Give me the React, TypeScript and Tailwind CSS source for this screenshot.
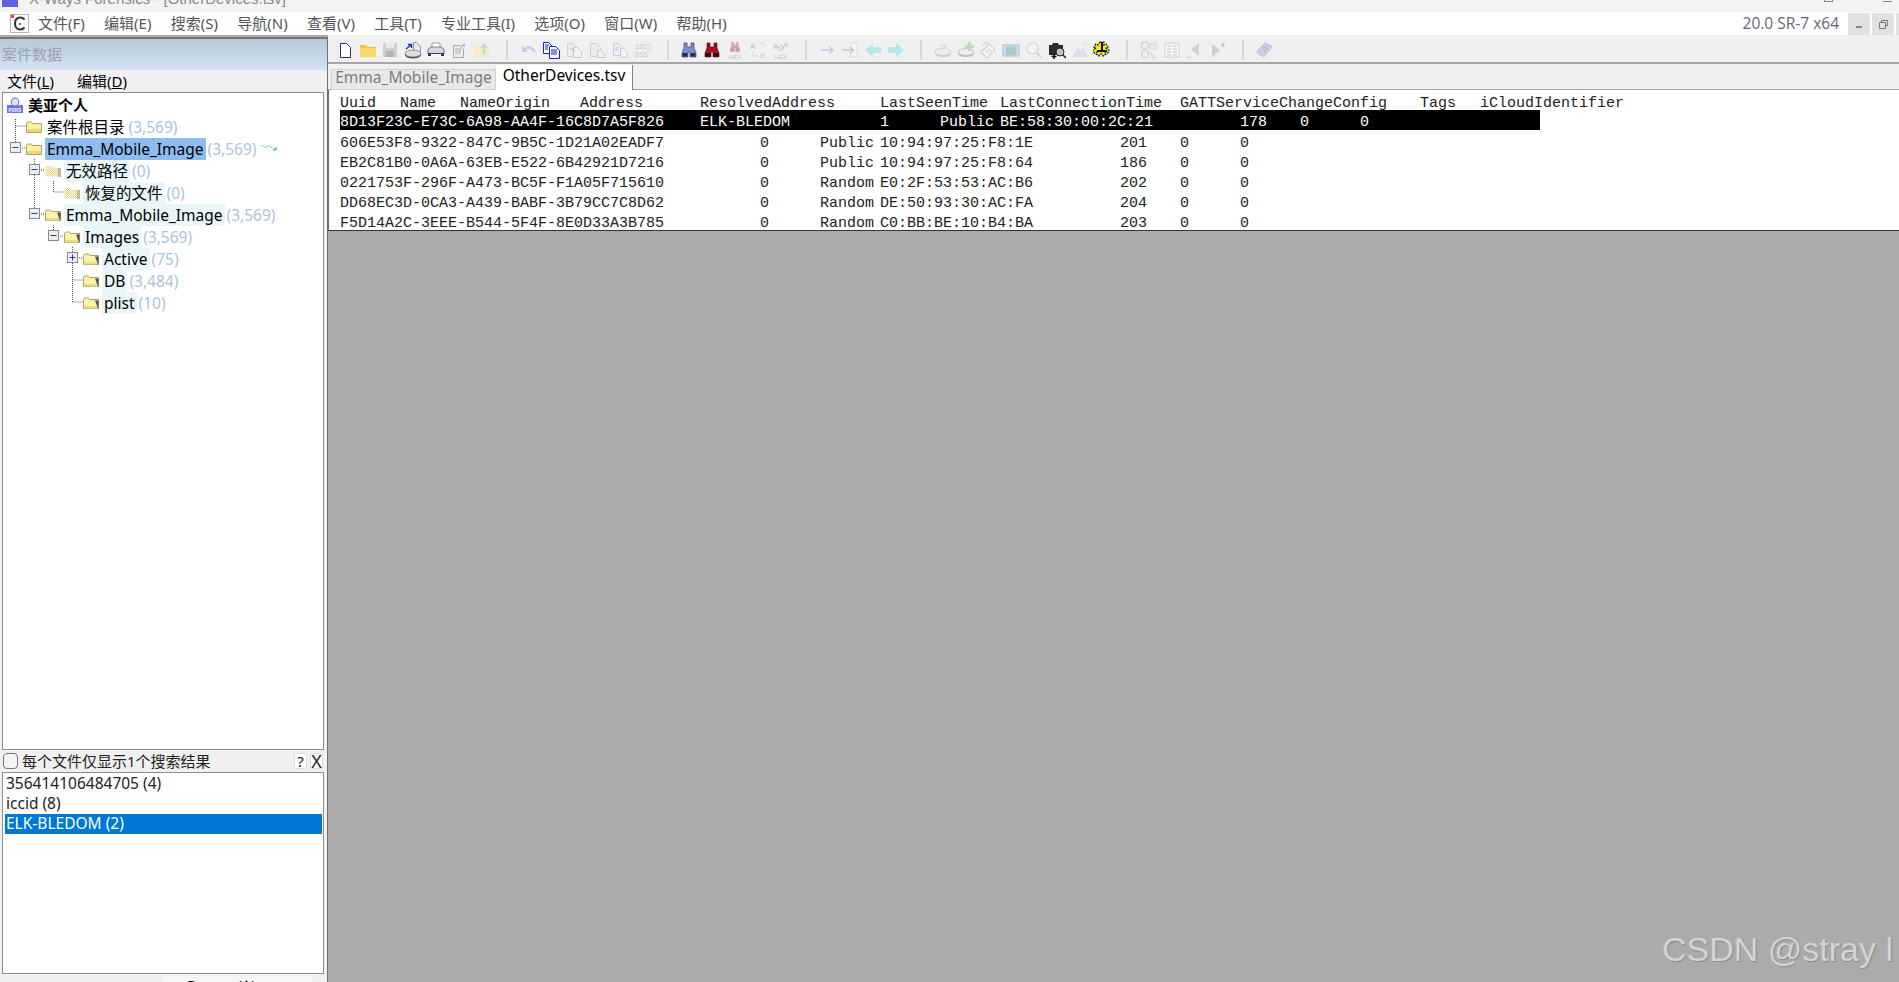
import type { ReactNode } from "react";

const uiFont = "font-['Noto_Sans','Noto_Sans_CJK_SC',sans-serif]";

const menus = ["文件(F)", "编辑(E)", "搜索(S)", "导航(N)", "查看(V)", "工具(T)", "专业工具(I)", "选项(O)", "窗口(W)", "帮助(H)"];

const tableRows = [
  "606E53F8-9322-847C-9B5C-1D21A02EADF7\t\t0\tPublic\t10:94:97:25:F8:1E\t\t201\t0\t0",
  "EB2C81B0-0A6A-63EB-E522-6B42921D7216\t\t0\tPublic\t10:94:97:25:F8:64\t\t186\t0\t0",
  "0221753F-296F-A473-BC5F-F1A05F715610\t\t0\tRandom\tE0:2F:53:53:AC:B6\t\t202\t0\t0",
  "DD68EC3D-0CA3-A439-BABF-3B79CC7C8D62\t\t0\tRandom\tDE:50:93:30:AC:FA\t\t204\t0\t0",
  "F5D14A2C-3EEE-B544-5F4F-8E0D33A3B785\t\t0\tRandom\tC0:BB:BE:10:B4:BA\t\t203\t0\t0",
];

const Svg = ({ children, className = "" }: { children: ReactNode; className?: string }) => (
  <svg viewBox="0 0 18 18" width="18" height="18" className={className}>{children}</svg>
);

const Doc = ({ x = 4, y = 2, w = 10, h = 14, stroke = "#2b2f7a", fill = "#fff" }) => (
  <path d={`M${x + 0.5} ${y + 0.5}h${w - 4}l4 4v${h - 4}h-${w}z`} fill={fill} stroke={stroke} />
);

const Binoculars = ({ color, dark, opacity = 1 }: { color: string; dark: string; opacity?: number }) => (
  <g opacity={opacity}>
    <path d="M4 2h3v4h4V2h3v5l2 5v4h-6v-5H8v5H2v-4l2-5z" fill={color} stroke={dark} strokeWidth="0.6" />
    <rect x="2.5" y="12" width="5" height="3.5" fill={dark} />
    <rect x="10.5" y="12" width="5" height="3.5" fill={dark} />
  </g>
);

const Hex = () => <text x="9" y="17.5" fontSize="6" textAnchor="middle" fill="#c4c4c4" fontFamily="Liberation Sans">HEX</text>;

const Disk = ({ o = 1 }: { o?: number }) => (
  <g opacity={o}>
    <ellipse cx="9" cy="12.5" rx="8" ry="3.5" fill="#a9a9a9" />
    <ellipse cx="9" cy="11" rx="8" ry="3.5" fill="#ececec" stroke="#a0a0a0" strokeWidth="0.6" />
  </g>
);

const toolbar: (ReactNode | null)[] = [
  <Svg><Doc /></Svg>,
  <Svg>
    <path d="M1 4h6l1.5 2H17v10H1z" fill="#f7c234" />
    <path d="M1 7h16v9H1z" fill="#fcd765" />
  </Svg>,
  <Svg>
    <path d="M2 2h14v14H2z" fill="#cfcfcf" />
    <path d="M5 2h8v5H5z" fill="#ececec" />
    <path d="M5 10h8v6H5z" fill="#b5b5b5" />
  </Svg>,
  <Svg>
    <Doc x={9} y={1} w={7} h={9} stroke="#8a8fc0" fill="#e8e9f8" />
    <path d="M2 8l5-4M4 3.5h3.5V7" fill="none" stroke="#1a2bb0" strokeWidth="1.4" />
    <ellipse cx="9" cy="14" rx="8" ry="3.5" fill="#555" />
    <ellipse cx="9" cy="12.5" rx="8" ry="3.5" fill="#dcdcdc" stroke="#666" strokeWidth="0.6" />
  </Svg>,
  <Svg>
    <path d="M5 2h8v5H5z" fill="#fff" stroke="#777" strokeWidth="0.7" />
    <path d="M1 8l3-2h10l3 2v5H1z" fill="#cfd6dc" stroke="#556" strokeWidth="0.7" />
    <path d="M1 12h16v3H1z" fill="#3b4048" />
    <path d="M4 13h10v3H4z" fill="#f6f6f6" />
  </Svg>,
  <Svg>
    <Doc x={3} y={4} w={10} h={12} stroke="#aaa" fill="#ececec" />
    <path d="M5 8h6M5 10h6M5 12h6" stroke="#b0b0b0" />
    <path d="M10 5l5-3v4z" fill="#bdbdd8" />
  </Svg>,
  <Svg>
    <path d="M1 4h6l1 2h9v10H1z" fill="#f4ecc8" />
    <path d="M11 2l4 5h-2.5v6h-3V7H7z" fill="#bfe3c2" />
  </Svg>,
  null,
  <Svg><path d="M2 5v6h6L6 9c2-2 6-2 8 3l1.500-1C14 5 8 3 4.500 7z" fill="#bcd0ea" /></Svg>,
  <Svg>
    <Doc x={1} y={1} w={9} h={11} stroke="#1420c8" />
    <Doc x={7} y={5} w={10} h={12} stroke="#1420c8" />
    <path d="M9 9h6M9 11h6M9 13h6M3 4h4M3 6h3M3 8h3" stroke="#1420c8" />
  </Svg>,
  <Svg>
    <Doc x={2} y={2} w={9} h={13} stroke="#d6cdbc" fill="#efece6" />
    <Doc x={8} y={6} w={8} h={10} stroke="#cbc7d6" fill="#f2f2f2" />
    <path d="M5 8h4v3" fill="none" stroke="#c4bcae" />
  </Svg>,
  <Svg>
    <Doc x={2} y={2} w={10} h={13} stroke="#d6cdbc" fill="#efece6" />
    <Doc x={9} y={9} w={7} h={7} stroke="#cbc7d6" fill="#f2f2f2" />
  </Svg>,
  <Svg>
    <Doc x={2} y={2} w={9} h={12} stroke="#c8c8e0" fill="#efeff6" />
    <Doc x={9} y={7} w={7} h={9} stroke="#c8c8e0" fill="#f2f2f2" />
    <text x="6" y="10" fontSize="7" fill="#c0c0d8" textAnchor="middle" fontFamily="Liberation Sans">k</text>
  </Svg>,
  <Svg>
    <text x="1" y="8" fontSize="7.5" fill="#c0c0c0" fontFamily="Liberation Sans">101</text>
    <text x="1" y="16" fontSize="7.5" fill="#c0c0c0" fontFamily="Liberation Sans">010</text>
    <path d="M13 3h3v7h-3" fill="none" stroke="#cfcfcf" />
  </Svg>,
  null,
  <Svg><Binoculars color="#7f90c8" dark="#232b63" /></Svg>,
  <Svg><Binoculars color="#a3141c" dark="#3a0508" /></Svg>,
  <Svg>
    <g transform="translate(3 0) scale(0.66)"><Binoculars color="#d8a6a6" dark="#c09a9a" /></g>
    <Hex />
  </Svg>,
  <Svg>
    <text x="1" y="8" fontSize="8" fill="#bcbcbc" fontFamily="Liberation Sans">A</text>
    <text x="11" y="17" fontSize="8" fill="#c2cce8" fontFamily="Liberation Sans">B</text>
    <path d="M11 2l4 0v4M4 11v4h5" fill="none" stroke="#c2cce8" strokeDasharray="1.500 1" />
  </Svg>,
  <Svg>
    <text x="1" y="8" fontSize="8" fill="#bcbcbc" fontFamily="Liberation Sans">A</text>
    <path d="M9 8l6-5M12 3h3v3" fill="none" stroke="#b6c6e6" />
    <circle cx="9" cy="7" r="2.500" fill="none" stroke="#c2cce8" />
    <Hex />
  </Svg>,
  null,
  <Svg><path d="M2 9h12M10 5.500L14 9l-4 3.500" fill="none" stroke="#c3c6e6" strokeWidth="1.300" /></Svg>,
  <Svg>
    <path d="M9 2h7v14H9l1-2-1-2 1-3-1-2 1-2z" fill="#f3f3f3" stroke="#d2d2d2" strokeWidth="0.6" />
    <path d="M1 9h11M9 5.500L12.500 9 9 12.500" fill="none" stroke="#c3c6e6" strokeWidth="1.300" />
  </Svg>,
  <Svg><path d="M1 9l8-7v4h8v6H9v4z" fill="#b6e7ea" /></Svg>,
  <Svg><path d="M17 9l-8-7v4H1v6h8v4z" fill="#b6e7ea" /></Svg>,
  null,
  <Svg>
    <Disk o={0.55} />
    <path d="M6 6c1-3 5-3 6 0M12 3v3.500H9" fill="none" stroke="#cfcfcf" />
  </Svg>,
  <Svg>
    <Disk o={0.75} />
    <path d="M11 1h3v3h3v3h-3v3h-3V7H8V4h3z" fill="#bcdcc0" />
  </Svg>,
  <Svg>
    <path d="M2 11l8-8 6 6-8 8z" fill="#f4f4f4" stroke="#c4c4c4" />
    <path d="M6 8l5 5M8 6l5 5" stroke="#cdcdcd" />
    <path d="M4 5c1-3 4-4 6-3" fill="none" stroke="#c6c6c6" />
  </Svg>,
  <Svg>
    <rect x="1" y="4" width="16" height="11" fill="#cfe9ee" stroke="#8fb6c6" strokeWidth="0.8" />
    <path d="M3 7h12M3 9h12M3 11h12M3 13h12M5 5v9M7 5v9M9 5v9M11 5v9M13 5v9" stroke="#94a8b4" strokeWidth="0.6" />
  </Svg>,
  <Svg>
    <circle cx="7.500" cy="7.500" r="5.500" fill="#eef3f7" stroke="#cfdae4" strokeWidth="1.400" />
    <path d="M11.500 11.500l5 5" stroke="#d5d5d5" strokeWidth="2" />
  </Svg>,
  <Svg>
    <path d="M1 4h3l1-2h5l1 2h4v10H1z" fill="#2c2c2c" />
    <circle cx="12" cy="11" r="4" fill="#b8c4cc" stroke="#222" />
    <path d="M6 13v5M3.500 15.500h5" stroke="#111" strokeWidth="1.500" />
    <path d="M15 14l3 3" stroke="#222" strokeWidth="1.500" />
  </Svg>,
  <Svg>
    <path d="M1 16l6-10 3 4 2-3 5 9z" fill="#dfe0ee" />
    <circle cx="14" cy="4" r="2" fill="#f4e6c2" />
  </Svg>,
  <Svg>
    <path d="M7 1h4v3l2-1 2 3-2 1 3 2-1 3-3-1 1 2-3 2-1-2h-2l-1 2-3-2 1-2-3 1-1-3 3-2-2-1 2-3 2 1z" fill="#f5e21f" stroke="#111" strokeWidth="1.200" strokeDasharray="2 1" />
    <path d="M8 1h2v8H8zM4 9h10v2H4z" fill="#111" />
  </Svg>,
  null,
  <Svg>
    <circle cx="5" cy="4.500" r="3.500" fill="none" stroke="#c4d4da" strokeWidth="1.200" />
    <circle cx="5" cy="13" r="3.500" fill="none" stroke="#c4d4da" strokeWidth="1.200" />
    <path d="M10 2h7v6h-7zM10 11l6 6-3 .5z" fill="#e8e8e8" stroke="#cfcfcf" strokeWidth="0.6" />
  </Svg>,
  <Svg>
    <rect x="2" y="2" width="14" height="14" fill="#f6f6f6" stroke="#cfcfcf" />
    <path d="M4 5h4M4 8h4M4 11h4M4 14h4M10 5h4M10 8h4M10 11h4M10 14h4" stroke="#c6c6c6" />
  </Svg>,
  <Svg>
    <path d="M13 2v13L5 8.500z" fill="#d2d2d2" />
    <path d="M1 16h4" stroke="#cfcfcf" />
  </Svg>,
  <Svg>
    <path d="M3 3v13l8-6.500z" fill="#cfcfcf" />
    <path d="M12 4h4M14 2v4" stroke="#bdbdbd" strokeWidth="1.200" />
  </Svg>,
  null,
  <Svg>
    <path d="M1 10l8-8 7 3-1 2-7 9-7-4z" fill="#d8c6ea" stroke="#bda6d6" strokeWidth="0.6" />
    <text x="9" y="11" fontSize="8" fill="#c7b348" textAnchor="middle" fontFamily="Liberation Sans">?</text>
  </Svg>,
];

const ClosedFolder = () => (
  <svg viewBox="0 0 16 12" width="16" height="12" className="shrink-0">
    <path d="M.5 2.500l1-1.500h4l1 1.500h9v9H.5z" fill="#fdf09a" stroke="#a8a278" />
    <path d="M1 8h14v3H1z" fill="#efd67c" />
  </svg>
);

const OpenFolder = () => (
  <svg viewBox="0 0 16 12" width="16" height="12" className="shrink-0">
    <path d="M.5 2.500l1-1.500h4l1 1.500h9v9H.5z" fill="#fdf2a6" stroke="#a8a278" />
    <path d="M12 3.500l3.500 0v8H15z" fill="#54544a" />
    <path d="M1 9h13v2.500H1z" fill="#efd984" />
  </svg>
);

const GhostFolder = () => (
  <svg viewBox="0 0 16 12" width="16" height="12" className="shrink-0">
    <defs>
      <pattern id="hatch" width="2" height="2" patternUnits="userSpaceOnUse">
        <rect width="2" height="2" fill="#fff" />
        <rect width="1" height="1" fill="#e8cf6a" />
        <rect x="1" y="1" width="1" height="1" fill="#e8cf6a" />
      </pattern>
    </defs>
    <path d="M.5 2.500l1-1.500h4l1 1.500h9v9H.5z" fill="url(#hatch)" />
    <path d="M13 3h3v9h-3z" fill="#a8a48e" opacity="0.7" />
  </svg>
);

const RootIcon = () => (
  <svg viewBox="0 0 16 16" width="16" height="16" className="shrink-0">
    <rect x="0" y="8" width="16" height="8" fill="#6a72e8" />
    <circle cx="8" cy="5" r="3.800" fill="#dde4fa" stroke="#8088d8" strokeWidth="1.200" />
    <path d="M10.500 8l3 2.500" stroke="#8088d8" strokeWidth="1.400" />
    <text x="8" y="15" fontSize="4.500" textAnchor="middle" fill="#fff" fontFamily="Liberation Sans">PORS</text>
  </svg>
);

type Node = {
  name: string;
  count?: string;
  pad: string;
  icon: ReactNode;
  label: string;
  extra?: ReactNode;
};

const mint = "bg-[#e8f6f7]";

const tree: Node[] = [
  { name: "案件根目录", count: "(3,569)", pad: "pl-[23px]", icon: <ClosedFolder />, label: "" },
  {
    name: "Emma_Mobile_Image",
    count: "(3,569)",
    pad: "pl-[23px]",
    icon: <ClosedFolder />,
    label: "bg-[#8dbdf0]",
    extra: (
      <svg viewBox="0 0 16 8" width="16" height="8" className="ml-[5px] mb-[2px]">
        <path d="M0 1.500c2 0 2 1.500 4 1.500s2-1 4-1 2 2 4 2l3 1.500" fill="none" stroke="#4aa6aa" strokeWidth="0.9" strokeDasharray="1.200 .6" />
        <path d="M15 3v3h-3" fill="none" stroke="#2c8a90" strokeWidth="0.9" />
      </svg>
    ),
  },
  { name: "无效路径", count: "(0)", pad: "pl-[42px]", icon: <GhostFolder />, label: mint },
  { name: "恢复的文件", count: "(0)", pad: "pl-[61px]", icon: <GhostFolder />, label: mint },
  { name: "Emma_Mobile_Image", count: "(3,569)", pad: "pl-[42px]", icon: <OpenFolder />, label: mint },
  { name: "Images", count: "(3,569)", pad: "pl-[61px]", icon: <OpenFolder />, label: mint },
  { name: "Active", count: "(75)", pad: "pl-[80px]", icon: <OpenFolder />, label: mint },
  { name: "DB", count: "(3,484)", pad: "pl-[80px]", icon: <OpenFolder />, label: mint },
  { name: "plist", count: "(10)", pad: "pl-[80px]", icon: <OpenFolder />, label: mint },
];

// dotted connectors and expander boxes, coordinates are inside the tree box
const TreeLines = () => {
  const boxes: [number, number, boolean][] = [
    [7, 55, false],
    [26, 77, false],
    [26, 121, false],
    [45, 143, false],
    [64, 165, true],
  ];
  return (
    <svg className="absolute left-0 top-0" width="120" height="230">
      <path
        d="M12.500 26V56M12.500 33H23M17 55H23M31.500 66V122M36 77H42M36 121H42M50.500 88V99H61M50.500 132V144M55 143H61M69.500 154V209M74 165H80M69.500 187H80M69.500 209H80"
        fill="none"
        stroke="#555"
        strokeDasharray="1 1"
      />
      {boxes.map(([x, y, plus]) => (
        <g key={x + "-" + y}>
          <rect x={x + 0.5} y={y - 5.5} width="10" height="10" fill="#eceef2" stroke="#8a8a8a" />
          <path d={plus ? `M${x + 2.5} ${y - 0.5}h6M${x + 5.5} ${y - 3.5}v6` : `M${x + 2.5} ${y - 0.5}h6`} stroke="#2b3f8c" />
        </g>
      ))}
    </svg>
  );
};

const App = () => {
  return (
    <div className={`relative w-[1899px] h-[982px] overflow-hidden flex flex-col bg-[#ababab] ${uiFont}`}>
      {/* window title, cut off by the screenshot */}
      <div className="h-[12px] shrink-0 bg-[#f3f3f3] overflow-hidden flex items-end pl-[2px] pr-[4px]">
        <svg viewBox="0 0 16 7" width="16" height="7" className="mb-[5px] shrink-0">
          <rect width="16" height="7" fill="#5c62e0" />
        </svg>
        <span className="ml-[11px] text-[15px] leading-[20px] mb-[3px] text-[#8a8a8a] font-['Liberation_Sans',sans-serif] whitespace-pre">
          X-Ways Forensics - [OtherDevices.tsv]
        </span>
        <div className="ml-auto flex items-end gap-[50px] pr-[3px] mb-[10px]">
          <div className="w-[9px] h-[3px] border-x border-b border-[#888]" />
          <div className="w-[9px] h-[3px] border-b border-[#888]" />
        </div>
      </div>

      {/* menu bar */}
      <div className="h-[23px] shrink-0 bg-white flex items-center">
        <svg viewBox="0 0 19 19" width="19" height="19" className="ml-[10px] mr-[9px] shrink-0">
          <rect x=".5" y=".5" width="18" height="18" fill="#fff" stroke="#b5b5b5" />
          <path d="M14.500 5.500c-3-3.500-9.500-2.500-9.500 4s6.500 7.500 9.500 4" fill="none" stroke="#333" strokeWidth="2" />
          <rect x="1" y="1" width="3" height="3" fill="#e04a1c" />
          <rect x="9" y="9" width="2" height="2" fill="#e04a1c" />
        </svg>
        <div className="flex gap-[19.300px] text-[15px] text-[#555]">
          {menus.map((m) => <span key={m} className="whitespace-nowrap">{m}</span>)}
        </div>
        <span className="ml-auto mr-[9px] text-[15.500px] text-[#667] font-['Open_Sans',sans-serif]">20.0 SR-7 x64</span>
        <div className="flex gap-[2px] self-stretch pt-px">
          <div className="w-[22px] bg-[#e1e1e1] flex items-center justify-center">
            <div className="w-[6px] h-[2px] bg-[#888] mt-[6px]" />
          </div>
          <div className="w-[22px] bg-[#e1e1e1] flex items-center justify-center">
            <svg viewBox="0 0 9 9" width="9" height="9"><path d="M2.500 2.500v-2h6v5h-2M.5 2.500h6v6h-6z" fill="none" stroke="#777" /></svg>
          </div>
          <div className="w-[3px] bg-[#e1e1e1]" />
        </div>
      </div>

      <div className="flex-1 flex min-h-0">
        {/* left panel */}
        <div className="w-[328px] shrink-0 flex flex-col bg-[#f0f0f0] border-r border-[#6f6f6f] mt-[2px] border-t-2 border-t-[#777]">
          <div className="h-[31px] shrink-0 bg-linear-to-b from-[#b5c9da] to-[#d4e3f1] flex items-center pl-[2px] text-[15px] text-[#9aa4ad]">
            案件数据
          </div>
          <div className="h-[22px] shrink-0 flex items-center text-[15px] text-black pl-[7px] gap-[23px]">
            <span>文件(<u>L</u>)</span>
            <span>编辑(<u>D</u>)</span>
          </div>
          <div className="flex-1 flex flex-col mx-[2px] mr-[3px] min-h-0">
            <div className="relative h-[658px] shrink-0 bg-white border border-[#8e8e8e] pt-px text-[15.500px] text-black">
              <TreeLines />
              <div className="relative flex flex-col">
                <div className="h-[22px] flex items-center pl-[4px] gap-[5px] font-bold text-[15px]">
                  <RootIcon />
                  <span>美亚个人</span>
                </div>
                {tree.map((n, i) => (
                  <div key={i} className={`h-[22px] flex items-center ${n.pad} whitespace-nowrap`}>
                    {n.icon}
                    <span className={`ml-[3px] h-[22px] px-[2px] leading-[23px] ${n.label}`}>{n.name}</span>
                    <span className="ml-[2px] leading-[23px] text-[#a9c3dd]">{n.count}</span>
                    {n.extra}
                  </div>
                ))}
              </div>
            </div>
            <div className="h-[22px] shrink-0 flex items-center text-[15px] text-[#222]">
              <div className="w-[15px] h-[16px] ml-px rounded-[4px] border border-[#777] bg-[#f4f4f4] shrink-0" />
              <span className="ml-[4px]">每个文件仅显示1个搜索结果</span>
              <div className="ml-auto flex gap-[3px] pr-px">
                <div className="w-[13px] h-[16px] rounded-[2px] border border-[#ddd] bg-white flex items-center justify-center text-[15px] leading-none">?</div>
                <div className="w-[13px] h-[16px] rounded-[2px] border border-[#ddd] bg-white flex items-center justify-center text-[18px] leading-none">X</div>
              </div>
            </div>
            <div className="h-[202px] shrink-0 bg-white border border-[#8e8e8e] p-px pl-[2px] text-[15.500px] leading-[18px] text-[#222]">
              <div className="h-[20px] pl-px">356414106484705 (4)</div>
              <div className="h-[20px] pl-px">iccid (8)</div>
              <div className="h-[20px] pl-px bg-[#0078d7] text-white">ELK-BLEDOM (2)</div>
            </div>
            <div className="flex-1 flex justify-end pr-[12px] overflow-hidden pt-[2px]">
              <div className="w-[149px] h-[20px] bg-[#f6f6f6] pl-[24px] text-[15px] tracking-wide leading-[18px] text-black">Power (^)</div>
            </div>
          </div>
        </div>

        {/* right side */}
        <div className="flex-1 flex flex-col min-w-0">
          <div className="h-[29px] shrink-0 bg-[#f0f0f0] border-b-2 border-[#a6a6a6] flex items-center pl-[5.500px] pt-[2px]">
            {toolbar.map((icon, i) =>
              icon ? (
                <div key={i} className="w-[22.800px] h-[22px] shrink-0 flex items-center justify-center">{icon}</div>
              ) : (
                <div key={i} className="w-[24.100px] h-[20px] shrink-0 pl-[3px] flex justify-center">
                  <div className="w-[2px] h-full bg-[#d8d8d8]" />
                </div>
              )
            )}
          </div>
          <div className="h-[26px] shrink-0 bg-[#f0f0f0] border-b border-[#a0a0a0] flex items-end pl-[3px] text-[15.500px] whitespace-nowrap">
            <div className="w-[165px] h-[21px] mb-[-1px] pb-[3px] bg-[#e8e8e8] border border-[#d0d0d0] text-[#7c7c7c] flex items-center justify-center">Emma_Mobile_Image</div>
            <div className="w-[137px] h-[25px] mb-[-1px] pb-[4px] bg-white border-r border-[#808080] text-black flex items-center justify-center">OtherDevices.tsv</div>
          </div>
          <div className="h-[141px] shrink-0 bg-white border-l border-[#6f6f6f] border-b border-b-[#333] pl-[11px] overflow-hidden font-['Liberation_Mono',monospace] text-[15px] leading-[28px] text-[#222] whitespace-pre [tab-size:60px]">
            <div className="h-[20px]">{"Uuid\tName\tNameOrigin\tAddress\tResolvedAddress\tLastSeenTime\tLastConnectionTime\tGATTServiceChangeConfig\tTags\tiCloudIdentifier"}</div>
            <div className="h-[20px] w-[1200px] bg-black text-white leading-[25px]">{"8D13F23C-E73C-6A98-AA4F-16C8D7A5F826\tELK-BLEDOM\t\t1\tPublic\tBE:58:30:00:2C:21\t\t178\t0\t0"}</div>
            {tableRows.map((r) => <div key={r} className="h-[20px]">{r}</div>)}
          </div>
          <div className="flex-1 bg-[#ababab]" />
        </div>
      </div>

      {/* watermark */}
      <div className="absolute right-[6px] bottom-[13px] text-[34px] leading-[40px] text-[#d4d4d4] font-['Liberation_Sans',sans-serif] [text-shadow:1px_1px_1px_#8a8a8a] whitespace-pre">
        CSDN @stray l
      </div>
    </div>
  );
};

export default App;
